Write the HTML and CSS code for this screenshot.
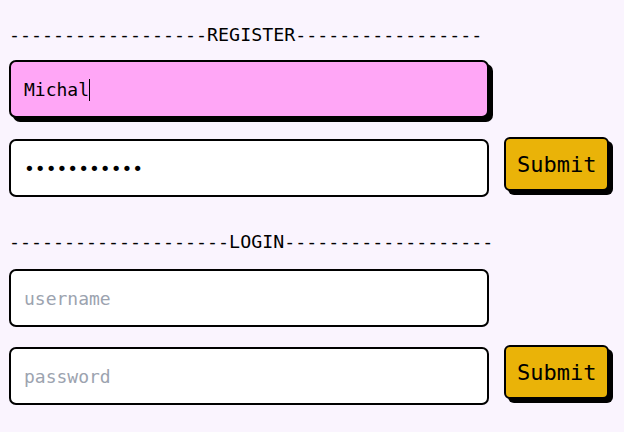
FILE: index.html
```html
<!DOCTYPE html>
<html lang="en">
<head>
<meta charset="utf-8">
<title>Register / Login</title>
<link rel="stylesheet" href="styles.css">
</head>
<body>
  <section class="block">
    <div class="divider">------------------REGISTER-----------------</div>
    <form class="form">
      <div class="row">
        <div class="field-wrap">
          <input class="field field-active" type="text" value="Michal">
          <span class="caret"></span>
        </div>
      </div>
      <div class="row">
        <input class="field" type="password" value="secretpass1">
        <button class="submit" type="button">Submit</button>
      </div>
    </form>
  </section>
  <section class="block block-login">
    <div class="divider">--------------------LOGIN-------------------</div>
    <form class="form">
      <div class="row">
        <input class="field" type="text" placeholder="username">
      </div>
      <div class="row">
        <input class="field" type="password" placeholder="password">
        <button class="submit" type="button">Submit</button>
      </div>
    </form>
  </section>
</body>
</html>
```
FILE: styles.css
```css
html, body {
  margin: 0;
  padding: 0;
}
body {
  background: #faf4fe;
  font-family: "DejaVu Sans Mono", "Liberation Mono", monospace;
  color: #000;
  padding: 24px 9px 0 9px;
}
.block {
  display: flex;
  flex-direction: column;
}
.block-login {
  margin-top: 34px;
}
.divider {
  font-size: 18.3px;
  line-height: 22px;
  white-space: pre;
}
.form {
  display: flex;
  flex-direction: column;
  gap: 21px;
  margin-top: 14px;
}
.block-login .form {
  margin-top: 16px;
  gap: 20px;
}
.row {
  display: flex;
  align-items: flex-start;
  gap: 15px;
}
.field-wrap {
  position: relative;
  display: flex;
}
.field {
  box-sizing: border-box;
  width: 480px;
  height: 58px;
  border: 2px solid #000;
  border-radius: 7px;
  background: #fff;
  padding: 0 13px;
  font-family: "DejaVu Sans Mono", "Liberation Mono", monospace;
  font-size: 18px;
  color: #000;
  outline: none;
  margin: 0;
}
.field::placeholder {
  color: #9ca3af;
}
.field-active {
  background: #ffa6f6;
  box-shadow: 4px 4px 0 #000;
}
.caret {
  position: absolute;
  left: 80px;
  top: 19px;
  width: 1px;
  height: 22px;
  background: #000;
}
.submit {
  box-sizing: border-box;
  margin: -2px 0 0 0;
  height: 54px;
  padding: 0 11px;
  border: 2px solid #000;
  border-radius: 6px;
  background: #eab308;
  box-shadow: 4px 4px 0 #000;
  font-family: "DejaVu Sans Mono", "Liberation Mono", monospace;
  font-size: 22px;
  color: #000;
  cursor: pointer;
}
```
